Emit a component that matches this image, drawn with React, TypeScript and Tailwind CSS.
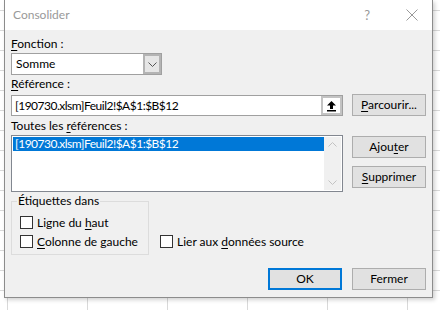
const U = ({ children }: { children: string }) => <span className="underline underline-offset-[2px]">{children}</span>;

const Chevron = ({ up, color }: { up?: boolean; color: string }) => (
  <svg width="9" height="5" viewBox="0 0 9 5" className="shrink-0">
    <path d={up ? "M0.5 4.5L4.5 0.5L8.5 4.5" : "M0.5 0.5L4.5 4.5L8.5 0.5"} fill="none" stroke={color} strokeWidth="1" />
  </svg>
);

const Btn = ({ children, focused }: { children: React.ReactNode; focused?: boolean }) => (
  <button
    className={
      "h-[22px] w-[74px] bg-[#e1e1e1] text-[12px] leading-[16px] text-black " +
      (focused ? "border-2 border-[#0078d7]" : "border border-[#adadad]")
    }
  >
    {children}
  </button>
);

const Check = ({ children }: { children: React.ReactNode }) => (
  <div className="flex h-[13px] items-center gap-[4px]">
    <span className="h-[13px] w-[13px] shrink-0 border border-[#333] bg-white" />
    <span className="whitespace-nowrap leading-[16px]">{children}</span>
  </div>
);

export default function App() {
  return (
    <div className="h-[310px] w-[440px] overflow-hidden bg-white bg-[linear-gradient(to_right,#d9d9d9_1px,transparent_1px),linear-gradient(to_bottom,#d9d9d9_1px,transparent_1px)] bg-size-[80px_20px] bg-position-[7px_10px] pl-[4px] font-[Lato] text-black">
      <div className="flex h-[298px] w-[429px] flex-col border-x border-b border-[#8c8c8c] bg-[#f0f0f0] shadow-[2px_2px_4px_rgba(0,0,0,0.18)]">
        {/* title bar */}
        <div className="flex h-[30px] items-center bg-white pl-[8px] pr-[14px]">
          <span className="text-[12px] leading-[16px] text-[#999]">Consolider</span>
          <span className="ml-auto text-[13px] leading-[16px] text-[#999]">?</span>
          <svg className="ml-[36px]" width="12" height="12" viewBox="0 0 12 12">
            <path d="M0.5 0.5L11.5 11.5M11.5 0.5L0.5 11.5" stroke="#999" strokeWidth="1" />
          </svg>
        </div>

        {/* body */}
        <div className="flex flex-col pl-[6px] pr-[6px] pt-[6px] text-[12px] leading-[16px]">
          <div className="h-[16px]">
            <U>F</U>onction :
          </div>
          <div className="mt-[1px] flex h-[22px] w-[151px] border border-[#a0a0a0] bg-white">
            <span className="flex-1 pl-[4px] leading-[20px]">Somme</span>
            <span className="flex w-[18px] shrink-0 items-center justify-center border-2 border-[#b4b4b4] bg-[#e6e6e6]">
              <Chevron color="#555" />
            </span>
          </div>

          <div className="mt-[1px] h-[16px]">
            <U>R</U>éférence :
          </div>
          <div className="mt-[2px] flex items-start gap-[9px]">
            <div className="mt-[1px] flex h-[21px] w-[332px] border border-[#a0a0a0] bg-white">
              <span className="flex-1 pl-[3px] leading-[19px] tracking-[-0.5px]">[190730.xlsm]Feuil2!$A$1:$B$12</span>
              <span className="flex w-[21px] items-center justify-center border-2 border-[#c3c3c3] bg-white">
                <svg width="11" height="12" viewBox="0 0 11 12">
                  <path d="M5.5 1L1 5.5H4V9H7V5.5H10Z" fill="#000" />
                  <rect x="1" y="10" width="9" height="1.5" fill="#000" />
                </svg>
              </span>
            </div>
            <Btn>
              <U>P</U>arcourir...
            </Btn>
          </div>

          <div className="mt-[2px] h-[16px]">
            Toutes les <U>r</U>éférences :
          </div>
          <div className="mt-[1px] flex items-start gap-[9px]">
            <div className="flex h-[57px] w-[332px] border border-[#828790] bg-white p-[1px]">
              <div className="flex-1">
                <div className="h-[14px] bg-[#0078d7] pl-[2px] leading-[14px] tracking-[-0.5px] text-white">
                  [190730.xlsm]Feuil2!$A$1:$B$12
                </div>
              </div>
              <div className="flex w-[17px] flex-col items-center justify-between bg-[#f0f0f0] py-[5px]">
                <Chevron up color="#c2c2c2" />
                <Chevron color="#c2c2c2" />
              </div>
            </div>
            <div className="mt-[1px] flex flex-col gap-[8px]">
              <Btn>
                Ajou<U>t</U>er
              </Btn>
              <Btn>
                <U>S</U>upprimer
              </Btn>
            </div>
          </div>

          <div className="mt-[1px] flex items-end">
            <fieldset className="w-[138px] border border-[#dcdcdc] pb-[6px] pl-[5px]">
              <legend className="px-[1px] leading-[16px]">Étiquettes dans</legend>
              <div className="ml-[3px] mt-[7px] flex flex-col gap-[6px]">
                <Check>
                  Ligne du <U>h</U>aut
                </Check>
                <Check>
                  <U>C</U>olonne de gauche
                </Check>
              </div>
            </fieldset>
            <div className="mb-[7px] ml-[11px]">
              <Check>
                Lier aux <U>d</U>onnées source
              </Check>
            </div>
          </div>

          <div className="mt-[13px] flex justify-end gap-[10px]">
            <Btn focused>OK</Btn>
            <Btn>Fermer</Btn>
          </div>
        </div>
      </div>
    </div>
  );
}
